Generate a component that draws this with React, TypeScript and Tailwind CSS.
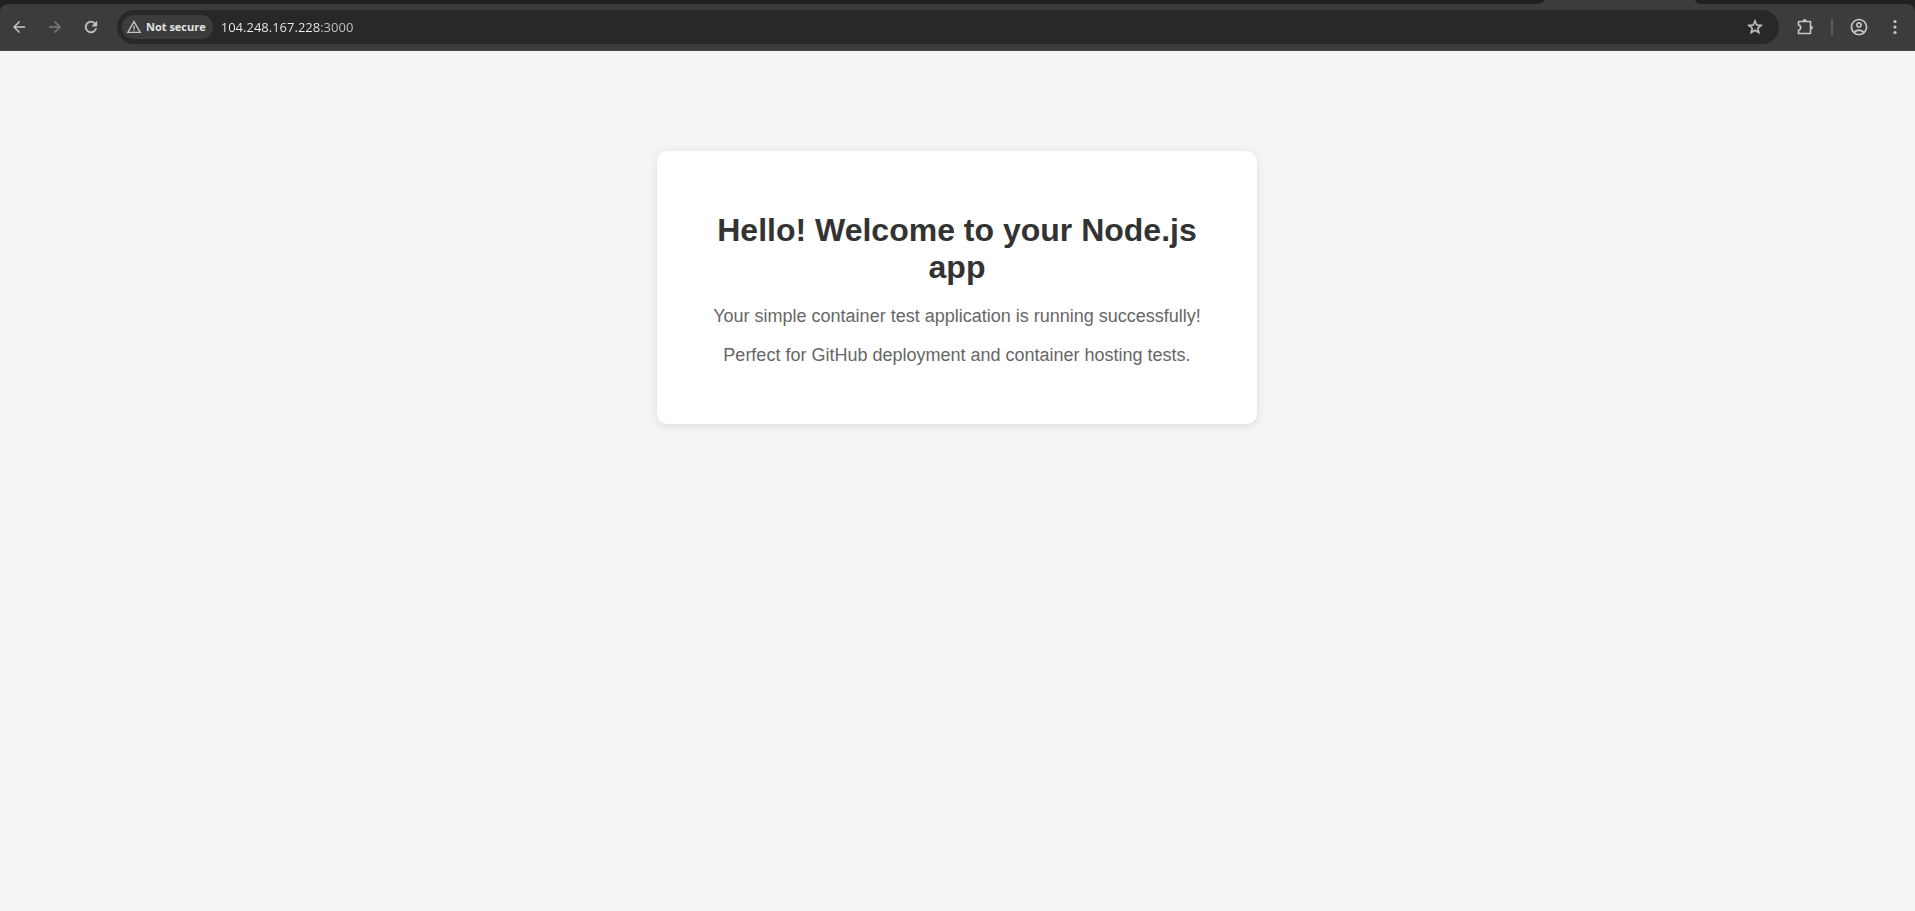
import type { ReactNode } from "react";
import {
  MdArrowBack,
  MdArrowForward,
  MdOutlineAccountCircle,
  MdWarningAmber,
} from "react-icons/md";

function ToolbarButton({
  label,
  disabled = false,
  children,
}: {
  label: string;
  disabled?: boolean;
  children: ReactNode;
}) {
  return (
    <button
      type="button"
      aria-label={label}
      disabled={disabled}
      className="flex size-7 shrink-0 items-center justify-center rounded-full text-[#c7c7c7] disabled:text-[#7a7a7a]"
    >
      {children}
    </button>
  );
}

function ReloadIcon() {
  return (
    <svg viewBox="0 0 24 24" className="size-[18px]" fill="currentColor" stroke="currentColor" strokeWidth="0.4">
      <path d="M17.65 6.35A7.958 7.958 0 0 0 12 4c-4.42 0-7.99 3.58-7.99 8s3.57 8 7.99 8c3.73 0 6.84-2.55 7.73-6h-2.08A5.99 5.99 0 0 1 12 18c-3.31 0-6-2.69-6-6s2.69-6 6-6c1.66 0 3.14.69 4.22 1.78L13 11h7V4l-2.35 2.35z" />
    </svg>
  );
}

function StarIcon() {
  return (
    <svg viewBox="0 0 24 24" className="size-[18px]" fill="currentColor" stroke="currentColor" strokeWidth="0.6">
      <path d="m22 9.24-7.19-.62L12 2 9.190 8.630 2 9.240l5.460 4.730L5.820 21 12 17.270 18.180 21l-1.630-7.030L22 9.240zM12 15.400l-3.760 2.270 1-4.280-3.320-2.880 4.380-.38L12 6.100l1.710 4.040 4.380.38-3.320 2.880 1 4.280L12 15.400z" />
    </svg>
  );
}

function ExtensionsIcon() {
  return (
    <svg viewBox="0 0 20 20" className="size-5" fill="none">
      <path
        d="M3.5 4.5H15.5V16.5H3.5V13.3C4.9 13 5.7 12 5.7 10.6S4.9 8.2 3.5 7.9Z"
        stroke="currentColor"
        strokeWidth="1.6"
        strokeLinejoin="round"
      />
      <path
        d="M7.8 4a1.9 1.9 0 0 1 3.8 0ZM16 8.7a1.9 1.9 0 0 1 0 3.8Z"
        fill="currentColor"
      />
    </svg>
  );
}

function MenuIcon() {
  return (
    <svg viewBox="0 0 18 18" className="size-[18px]" fill="currentColor">
      <circle cx="9" cy="3.5" r="1.6" />
      <circle cx="9" cy="9" r="1.6" />
      <circle cx="9" cy="14.5" r="1.6" />
    </svg>
  );
}

function TabStripEdge() {
  return (
    <div className="flex h-1 bg-[#3c3c3c]">
      <div className="flex-1 rounded-br-[8px_4px] bg-[#1f2020]" />
      <div className="w-[151px]" />
      <div className="w-[220px] rounded-bl-[8px_4px] bg-[#1f2020]" />
    </div>
  );
}

function BrowserBar() {
  return (
    <header className="bg-[#1f2020]">
      <TabStripEdge />
      <div className="flex h-[47px] items-center rounded-t-lg border-b border-[#474747] bg-[#3c3c3c] pr-[6px] pl-[5px]">
        <nav aria-label="Navigation" className="flex items-center gap-2">
          <ToolbarButton label="Back">
            <MdArrowBack className="size-[18px]" />
          </ToolbarButton>
          <ToolbarButton label="Forward" disabled>
            <MdArrowForward className="size-[18px]" />
          </ToolbarButton>
          <ToolbarButton label="Reload">
            <ReloadIcon />
          </ToolbarButton>
        </nav>
        <div className="ml-3 flex h-[34px] flex-1 items-center rounded-full bg-[#282828] pr-[10px] pl-[5px]">
          <button
            type="button"
            className="flex h-6 shrink-0 items-center gap-1 rounded-full bg-[#3c3c3c] pr-[7px] pl-1 font-['Open_Sans',sans-serif] text-[11px] font-bold text-[#e3e3e3]"
          >
            <MdWarningAmber className="size-4 text-[#c7c7c7]" />
            Not secure
          </button>
          <input
            type="text"
            aria-label="Address"
            defaultValue="104.248.167.228:3000"
            spellCheck={false}
            className="ml-2 h-6 min-w-0 flex-1 bg-[linear-gradient(90deg,#f0f0f0_100px,#c7c7c7_100px)] bg-clip-text font-['Open_Sans',sans-serif] text-[13px] text-transparent caret-white outline-none"
          />
          <ToolbarButton label="Bookmark this page">
            <StarIcon />
          </ToolbarButton>
        </div>
        <div className="ml-3 flex items-center gap-2">
          <div className="flex items-center gap-3">
            <ToolbarButton label="Extensions">
              <ExtensionsIcon />
            </ToolbarButton>
            <div className="h-4 w-[2px] bg-[#5c5c5c]" />
            <ToolbarButton label="Profile">
              <MdOutlineAccountCircle className="size-5" />
            </ToolbarButton>
          </div>
          <ToolbarButton label="Menu">
            <MenuIcon />
          </ToolbarButton>
        </div>
      </div>
    </header>
  );
}

export default function App() {
  return (
    <div className="flex min-h-screen flex-col bg-[#f5f5f5] font-['Liberation_Sans',Arial,sans-serif]">
      <BrowserBar />
      <main className="py-[100px] pr-[17px] pl-4">
        <section className="mx-auto max-w-[600px] rounded-[10px] bg-white px-10 pt-[61px] pb-[58px] text-center shadow-[0_2px_10px_rgba(0,0,0,0.1)]">
          <h1 className="mb-5 text-[32px] leading-[37px] font-bold text-[#333333]">
            Hello! Welcome to your Node.js app
          </h1>
          <div className="flex flex-col gap-[18px] text-[18px] leading-[21px] text-[#666666]">
            <p>Your simple container test application is running successfully!</p>
            <p>Perfect for GitHub deployment and container hosting tests.</p>
          </div>
        </section>
      </main>
    </div>
  );
}
